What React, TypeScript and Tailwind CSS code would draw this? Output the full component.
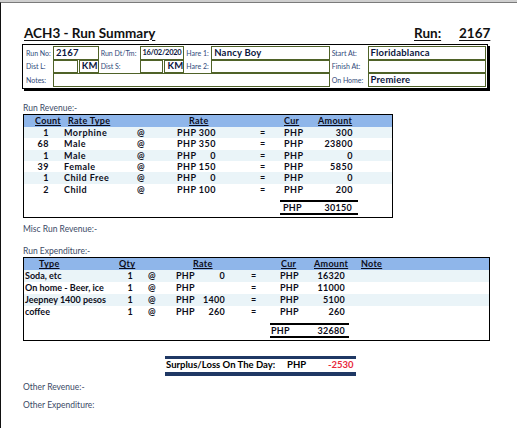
import React from "react";

const rev: [string, string, string, string][] = [
  ["1", "Morphine", "300", "300"],
  ["68", "Male", "350", "23800"],
  ["1", "Male", "0", "0"],
  ["39", "Female", "150", "5850"],
  ["1", "Child Free", "0", "0"],
  ["2", "Child", "100", "200"],
];

const exp: [string, string, string, string][] = [
  ["Soda, etc", "1", "0", "16320"],
  ["On home - Beer, ice", "1", "", "11000"],
  ["Jeepney 1400 pesos", "1", "1400", "5100"],
  ["coffee", "1", "260", "260"],
];

function Label({ children, w }: { children: React.ReactNode; w: string }) {
  return (
    <div className={`${w} h-full flex items-center pl-[2px] text-[7px] text-[#2f4a7a] whitespace-nowrap`}>{children}</div>
  );
}

function Box({ children, w }: { children?: React.ReactNode; w: string }) {
  return (
    <div className={`${w} h-full border border-[#4f6228] flex items-center pl-[2px] text-[9.5px] font-bold text-[#0b1640] whitespace-nowrap overflow-hidden tracking-[0.2px]`}>
      {children}
    </div>
  );
}

function U({ children }: { children: React.ReactNode }) {
  return <span className="underline decoration-1 underline-offset-[1px]">{children}</span>;
}

export default function App() {
  return (
    <div className="w-[517px] h-[428px] bg-[#cfcfcf] pt-[2px] font-['Lato',sans-serif] overflow-hidden">
      <div className="h-[426px] bg-white border-t border-l border-t-[#7a7a7a] border-l-[#111] flex flex-col">
        {/* Title row */}
        <div className="mt-[21px] h-[16px] flex items-end text-[#111] text-[13.5px] font-bold leading-none">
          <div className="ml-[23px] w-[390px]">
            <span className="underline underline-offset-[2px] decoration-1">ACH3 - Run Summary</span>
          </div>
          <div className="w-[45px]">
            <span className="underline underline-offset-[2px] decoration-1">Run:</span>
          </div>
          <div>
            <span className="underline underline-offset-[2px] decoration-1">2167</span>
          </div>
        </div>

        {/* Header info box */}
        <div className="mt-[4px] ml-[21px] w-[466px] h-[45px] border border-black shadow-[2px_2px_0_#000] pt-[1px] px-[1px] flex flex-col">
          <div className="h-[13.5px] flex">
            <Label w="w-[29px]">Run No:</Label>
            <Box w="w-[46px]">2167</Box>
            <Label w="w-[41px]">Run Dt/Tm:</Label>
            <Box w="w-[45px]"><span className="text-[7.5px] tracking-[-0.3px]">16/02/2020</span></Box>
            <Label w="w-[27px]">Hare 1:</Label>
            <Box w="w-[119px]">Nancy Boy</Box>
            <Label w="w-[38px]">Start At:</Label>
            <Box w="w-[119px]">Floridablanca</Box>
          </div>
          <div className="h-[13.5px] flex">
            <Label w="w-[29px]">Dist L:</Label>
            <Box w="w-[25px]" />
            <div className="w-[1px]" />
            <Box w="w-[20px]"><span className="w-full text-center pr-[2px]">KM</span></Box>
            <Label w="w-[41px]">Dist S:</Label>
            <Box w="w-[24px]" />
            <div className="w-[1px]" />
            <Box w="w-[20px]"><span className="w-full text-center pr-[2px]">KM</span></Box>
            <Label w="w-[27px]">Hare 2:</Label>
            <Box w="w-[119px]" />
            <Label w="w-[38px]">Finish At:</Label>
            <Box w="w-[119px]" />
          </div>
          <div className="h-[13.5px] flex">
            <Label w="w-[29px]">Notes:</Label>
            <Box w="w-[278px]" />
            <Label w="w-[38px]">On Home:</Label>
            <Box w="w-[119px]">Premiere</Box>
          </div>
        </div>

        {/* Run Revenue */}
        <div className="mt-[14px] ml-[22px] h-[10px] flex items-center text-[8.5px] text-[#3b4a66]">Run Revenue:-</div>
        <div className="mt-[1px] ml-[22px] w-[370px] border border-black pb-[2px] flex flex-col text-[9px] font-bold text-[#0d0d1a]">
          <div className="h-[12px] bg-[#8fb6ea] flex items-center tracking-[0.3px]">
            <span className="w-[44px] pl-[11px]"><U>Count</U></span>
            <span className="w-[121px]"><U>Rate Type</U></span>
            <span className="w-[95px]"><U>Rate</U></span>
            <span className="w-[34px]"><U>Cur</U></span>
            <span><U>Amount</U></span>
          </div>
          {rev.map((r, i) => (
            <div key={i} className={`h-[11.33px] flex items-center tracking-[0.5px] whitespace-nowrap ${i % 2 === 0 ? "bg-[#eaf4f8]" : ""}`}>
              <span className="w-[25px] text-right">{r[0]}</span>
              <span className="w-[81px] pl-[15px]">{r[1]}</span>
              <span className="w-[30px] pl-[7px]">@</span>
              <span className="w-[38px] pl-[17px]">PHP</span>
              <span className="w-[18px] text-right">{r[2]}</span>
              <span className="w-[59px] pl-[44px]">=</span>
              <span className="w-[35px] pl-[9px]">PHP</span>
              <span className="w-[43px] text-right">{r[3]}</span>
            </div>
          ))}
          <div className="mt-[5px] ml-[256px] w-[78px] h-[15px] border-t-2 border-b-2 border-black flex items-center justify-between pl-[3px] pr-[6px] tracking-[0.3px]">
            <span>PHP</span>
            <span>30150</span>
          </div>
        </div>

        <div className="mt-[6px] ml-[22px] h-[10px] flex items-center text-[8.5px] text-[#3b4a66]">Misc Run Revenue:-</div>
        <div className="mt-[12px] ml-[22px] h-[10px] flex items-center text-[8.5px] text-[#3b4a66]">Run Expenditure:-</div>

        {/* Expenditure */}
        <div className="mt-[1px] ml-[22px] w-[467px] border border-black pb-[2px] flex flex-col text-[9px] font-bold text-[#0d0d1a] tracking-[0.3px]">
          <div className="h-[12px] bg-[#8fb6ea] flex items-center">
            <span className="w-[95px] pl-[15px]"><U>Type</U></span>
            <span className="w-[74px]"><U>Qty</U></span>
            <span className="w-[88px]"><U>Rate</U></span>
            <span className="w-[33px]"><U>Cur</U></span>
            <span className="w-[47px]"><U>Amount</U></span>
            <span><U>Note</U></span>
          </div>
          {exp.map((r, i) => (
            <div key={i} className={`h-[12px] flex items-center whitespace-nowrap ${i % 2 === 0 ? "bg-[#eaf4f8]" : ""}`}>
              <span className="w-[90px] pl-[1px] tracking-[0px]">{r[0]}</span>
              <span className="w-[19px] text-right">{r[1]}</span>
              <span className="w-[43px] pl-[15px]">@</span>
              <span className="w-[24px]">PHP</span>
              <span className="w-[25px] text-right">{r[2]}</span>
              <span className="w-[55px] pl-[26px]">=</span>
              <span className="w-[30px]">PHP</span>
              <span className="w-[35px] text-right">{r[3]}</span>
            </div>
          ))}
          <div className="mt-[5px] ml-[246px] w-[79px] h-[15px] border-t-2 border-b-2 border-black flex items-center justify-between pl-[1px] pr-[4px]">
            <span>PHP</span>
            <span>32680</span>
          </div>
        </div>

        {/* Surplus */}
        <div className="mt-[15px] ml-[164px] w-[191px] h-[20px] border-t-[3px] border-b-[4px] border-[#1f3864] flex items-center text-[9.5px] font-bold text-black whitespace-nowrap">
          <span className="w-[122px] pl-[1px]">Surplus/Loss On The Day:</span>
          <span className="w-[41px]">PHP</span>
          <span className="text-[#e8283c]">-2530</span>
        </div>

        <div className="mt-[6px] ml-[22px] h-[10px] flex items-center text-[8.5px] text-[#3b4a66]">Other Revenue:-</div>
        <div className="mt-[8px] ml-[22px] h-[10px] flex items-center text-[8.5px] text-[#3b4a66]">Other Expenditure:</div>
      </div>
    </div>
  );
}
